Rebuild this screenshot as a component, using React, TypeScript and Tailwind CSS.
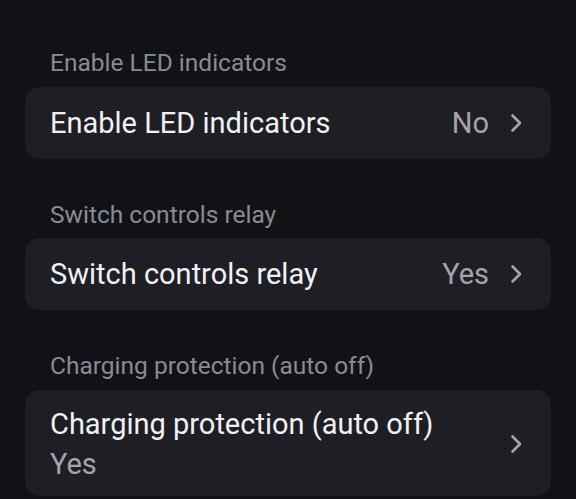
import React from 'react';

interface Setting {
    label: string;
    title: string;
    value: string;
    // 값이 제목 아래에 표시되는 경우
    stacked?: boolean;
}

const settings: Setting[] = [
    { label: 'Enable LED indicators', title: 'Enable LED indicators', value: 'No' },
    { label: 'Switch controls relay', title: 'Switch controls relay', value: 'Yes' },
    { label: 'Charging protection (auto off)', title: 'Charging protection (auto off)', value: 'Yes', stacked: true },
];

const Chevron = () => (
    <svg width="14" height="22" viewBox="0 0 14 22" fill="none" className="shrink-0">
        <path d="M3.5 3.5 L11 11 L3.5 18.5" stroke="#a4a5ac" strokeWidth="2.6" strokeLinecap="round" strokeLinejoin="round" />
    </svg>
);

const SettingRow: React.FC<{ setting: Setting }> = ({ setting }) => {
    if (setting.stacked) {
        return (
            <div className="flex items-center rounded-[15px] bg-[#1e1f25] pl-[25px] pr-[28px] pt-[14px] pb-[12px]">
                <div className="flex flex-col flex-1">
                    <span className="text-[29px] leading-[40px] text-[#f1f1f3]">{setting.title}</span>
                    <span className="text-[29px] leading-[40px] text-[#a4a5ac]">{setting.value}</span>
                </div>
                <Chevron />
            </div>
        );
    }

    return (
        <div className="flex items-center h-[72px] rounded-[15px] bg-[#1e1f25] pl-[25px] pr-[28px]">
            <span className="flex-1 pt-[2px] text-[29px] text-[#f1f1f3]">{setting.title}</span>
            <span className="pt-[2px] text-[29px] text-[#a4a5ac] mr-[20px]">{setting.value}</span>
            <Chevron />
        </div>
    );
};

export default function App() {
    return (
        <div className="w-[576px] h-[499px] overflow-hidden bg-[#111216] px-[25px] pt-[49px] font-['Roboto',sans-serif]">
            {settings.map((setting, i) => (
                <div key={i} className={i > 0 ? 'mt-[42px]' : ''}>
                    <div className="pl-[25px] h-[28px] leading-[28px] text-[24.5px] text-[#8a8b92] mb-[9.5px]">
                        {setting.label}
                    </div>
                    <SettingRow setting={setting} />
                </div>
            ))}
        </div>
    );
}
